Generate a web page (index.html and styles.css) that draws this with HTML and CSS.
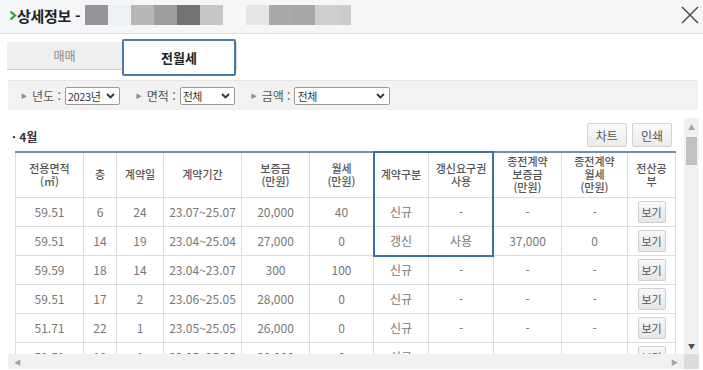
FILE: index.html
```html
<!DOCTYPE html>
<html lang="ko">
<head>
<meta charset="utf-8">
<link rel="stylesheet" href="styles.css">
</head>
<body>
<div class="header">
  <div class="title"><svg class="chev" width="8" height="11" viewBox="0 0 8 11"><path d="M1.5 1.5 L6 5.5 L1.5 9.5" stroke="#2f9a3c" stroke-width="2.2" fill="none"/></svg>상세정보 -</div>
  <div class="blur">
    <span class="b1"></span><span class="b2"></span><span class="b3"></span><span class="b4"></span><span class="b5"></span><span class="b6"></span><span class="b7"></span><span class="b8"></span><span class="b9"></span><span class="b10"></span><span class="b11"></span><span class="b12"></span>
  </div>
  <svg class="close" width="18" height="18" viewBox="0 0 18 18"><path d="M1 1 L17 17 M17 1 L1 17" stroke="#444" stroke-width="1.4" fill="none"/></svg>
</div>

<div class="tabs">
  <div class="tab">매매</div>
  <div class="tab active">전월세</div>
  <div class="tab-edge"></div>
</div>

<div class="filters">
  <div class="fitem"><span class="tri">▶</span><span class="flabel">년도 :</span><div class="sel w55"><span>2023년</span><svg width="9" height="6" viewBox="0 0 9 6"><path d="M1 1 L4.5 4.5 L8 1" stroke="#333" stroke-width="1.8" fill="none"/></svg></div></div>
  <div class="fitem"><span class="tri">▶</span><span class="flabel">면적 :</span><div class="sel w55"><span>전체</span><svg width="9" height="6" viewBox="0 0 9 6"><path d="M1 1 L4.5 4.5 L8 1" stroke="#333" stroke-width="1.8" fill="none"/></svg></div></div>
  <div class="fitem"><span class="tri">▶</span><span class="flabel">금액 :</span><div class="sel w96"><span>전체</span><svg width="9" height="6" viewBox="0 0 9 6"><path d="M1 1 L4.5 4.5 L8 1" stroke="#333" stroke-width="1.8" fill="none"/></svg></div></div>
</div>

<div class="scroller">
  <div class="content">
    <div class="toprow">
      <div class="month">· 4월</div>
      <div class="btns"><span class="btn">차트</span><span class="btn">인쇄</span></div>
    </div>
    <div class="tablewrap">
      <table class="grid">
        <colgroup>
          <col class="c1"><col class="c2"><col class="c3"><col class="c4"><col class="c5"><col class="c6"><col class="c7"><col class="c8"><col class="c9"><col class="c10"><col class="c11">
        </colgroup>
        <thead>
          <tr>
            <th>전용면적<br>(㎡)</th><th>층</th><th>계약일</th><th>계약기간</th><th>보증금<br>(만원)</th><th>월세<br>(만원)</th><th>계약구분</th><th>갱신요구권<br>사용</th><th>종전계약<br>보증금<br>(만원)</th><th>종전계약<br>월세<br>(만원)</th><th>전산공<br>부</th>
          </tr>
        </thead>
        <tbody>
          <tr><td>59.51</td><td>6</td><td>24</td><td>23.07~25.07</td><td>20,000</td><td>40</td><td>신규</td><td>-</td><td>-</td><td>-</td><td><span class="view">보기</span></td></tr>
          <tr><td>59.51</td><td>14</td><td>19</td><td>23.04~25.04</td><td>27,000</td><td>0</td><td>갱신</td><td>사용</td><td>37,000</td><td>0</td><td><span class="view">보기</span></td></tr>
          <tr><td>59.59</td><td>18</td><td>14</td><td>23.04~23.07</td><td>300</td><td>100</td><td>신규</td><td>-</td><td>-</td><td>-</td><td><span class="view">보기</span></td></tr>
          <tr><td>59.51</td><td>17</td><td>2</td><td>23.06~25.05</td><td>28,000</td><td>0</td><td>신규</td><td>-</td><td>-</td><td>-</td><td><span class="view">보기</span></td></tr>
          <tr><td>51.71</td><td>22</td><td>1</td><td>23.05~25.05</td><td>26,000</td><td>0</td><td>신규</td><td>-</td><td>-</td><td>-</td><td><span class="view">보기</span></td></tr>
          <tr><td>59.51</td><td>19</td><td>1</td><td>23.05~25.05</td><td>20,000</td><td>0</td><td>신규</td><td>-</td><td>-</td><td>-</td><td><span class="view">보기</span></td></tr>
        </tbody>
      </table>
      <div class="highlight"></div>
    </div>
  </div>
  <div class="vscroll">
    <div class="arrow">▲</div>
    <div class="track"><div class="thumb"></div></div>
    <div class="arrow">▼</div>
  </div>
  <div class="hscroll">
    <span class="harrow">◀</span>
    <span class="harrow">▶</span>
  </div>
  <div class="corner"></div>
</div>
</body>
</html>
```

FILE: styles.css
```css
* { box-sizing: border-box; }
html, body { margin: 0; padding: 0; background: #fff; }
body {
  width: 703px;
  height: 370px;
  overflow: hidden;
  font-family: "Noto Sans CJK KR", "Noto Sans", sans-serif;
  color: #333;
}

.header {
  height: 34px;
  background: #f5f6f8;
  border-bottom: 1px solid #dedfe2;
  display: flex;
  align-items: center;
  padding: 0 4px 0 9px;
}
.title {
  font-size: 15px;
  font-weight: 700;
  color: #222;
  letter-spacing: -0.3px;
  display: flex;
  align-items: center;
  margin-top: -3px;
}
.chev { margin-right: 0; }
.blur {
  display: flex;
  height: 20px;
  margin-left: 5px;
  margin-top: -4px;
}
.blur span { display: block; height: 20px; width: 23px; }
.b1 { background: #959499; }
.b2 { background: #eef1f4; }
.b3 { background: #b8b8b8; }
.b4 { background: #9e9ea0; }
.b5 { background: #747372; }
.b6 { background: #c6c6c6; }
.b7 { background: #f4f6f8; }
.b8 { background: #e5e5e6; }
.b9 { background: #a9a9a9; }
.b10 { background: #a6a7a6; }
.blur .b11 { background: #cfcfcf; width: 25px; }
.blur .b12 { background: #cccccc; width: 11px; }
.close { margin-left: auto; margin-top: -4px; }

.tabs {
  display: flex;
  align-items: flex-start;
  padding-left: 7px;
  margin-top: 5px;
  height: 37px;
}
.tab {
  width: 115px;
  height: 28px;
  margin-top: 3px;
  background: #efefef;
  border-bottom: 1px solid #c9d6c2;
  display: flex;
  align-items: center;
  justify-content: center;
  font-size: 12px;
  color: #8a8a8a;
}
.tab.active {
  width: 114px;
  height: 37px;
  margin-top: 0;
  background: #fff;
  border: 2px solid #4b79a8;
  border-radius: 2px;
  color: #222;
  font-weight: 700;
  font-size: 13px;
}
.tab-edge {
  width: 1px;
  height: 28px;
  margin-top: 3px;
  background: #d4d4d4;
}

.filters {
  margin: 4px 5px 0 8px;
  height: 30px;
  background: #f2f2f2;
  border-top: 1px solid #e4e4e4;
  display: flex;
  align-items: center;
  padding-left: 13px;
  gap: 16px;
}
.fitem { display: flex; align-items: center; }
.tri { font-size: 6px; color: #888; margin-right: 5px; }
.flabel { font-size: 12px; color: #555; margin-right: 4px; white-space: nowrap; }
.sel {
  height: 18px;
  border: 1px solid #999;
  border-radius: 2px;
  background: #fff;
  display: flex;
  align-items: center;
  justify-content: space-between;
  padding: 0 4px 0 2px;
  font-size: 11px;
  letter-spacing: -0.4px;
  color: #333;
  white-space: nowrap;
}
.w55 { width: 55px; }
.w96 { width: 96px; }

.scroller {
  margin: 8px 4px 0 8px;
  display: grid;
  grid-template-columns: 676px 15px;
  grid-template-rows: 236px 15px;
}
.content { overflow: hidden; padding: 5px 12px 0 7px; }
.toprow {
  display: flex;
  align-items: center;
  justify-content: space-between;
  height: 24px;
}
.month {
  font-size: 12px;
  font-weight: 700;
  color: #333;
  margin-left: -3px;
  margin-top: 2px;
}
.btns { display: flex; gap: 5px; }
.btn {
  height: 24px;
  padding: 0 8px;
  display: flex;
  align-items: center;
  font-size: 12px;
  color: #555;
  background: linear-gradient(#fafafa, #ebebeb);
  border: 1px solid #d3d3d3;
  border-radius: 2px;
}

.tablewrap { position: relative; margin-top: 4px; width: 660px; }
.grid {
  border-collapse: collapse;
  table-layout: fixed;
  width: 660px;
  border-top: 2px solid #6c8fb3;
}
.c1 { width: 68px; } .c2 { width: 33px; } .c3 { width: 47px; } .c4 { width: 78px; }
.c5 { width: 68px; } .c6 { width: 64px; } .c7 { width: 55px; } .c8 { width: 65px; }
.c9 { width: 68px; } .c10 { width: 66px; } .c11 { width: 48px; }
.grid th, .grid td {
  border: 1px solid #dcdcdc;
  text-align: center;
  padding: 0;
  white-space: nowrap;
}
.grid th {
  height: 45px;
  font-size: 11px;
  line-height: 13px;
  font-weight: 500;
  color: #555;
}
.grid td {
  height: 29px;
  font-size: 12px;
  color: #777;
}
.view {
  display: inline-block;
  width: 28px;
  height: 22px;
  line-height: 20px;
  font-size: 11px;
  color: #555;
  background: linear-gradient(#f8f8f8, #e6e6e6);
  border: 1px solid #cfcfcf;
  border-radius: 2px;
  vertical-align: middle;
}
.highlight {
  position: absolute;
  left: 358px;
  top: 0;
  width: 121px;
  height: 106px;
  border: 2px solid #3d6fa6;
  pointer-events: none;
}

.vscroll {
  background: #f1f1f1;
  display: flex;
  flex-direction: column;
}
.arrow {
  height: 17px;
  font-size: 7px;
  color: #a3a3a3;
  display: flex;
  align-items: center;
  justify-content: center;
}
.vscroll .arrow:last-child { color: #505050; }
.track { flex: 1; }
.thumb {
  margin: 2px 2px 0;
  height: 28px;
  background: #c1c1c1;
}
.hscroll {
  background: #f1f1f1;
  display: flex;
  align-items: center;
  justify-content: space-between;
  padding: 0 6px;
  font-size: 7px;
  color: #a3a3a3;
}
.corner { background: #dcdcdc; }
```
